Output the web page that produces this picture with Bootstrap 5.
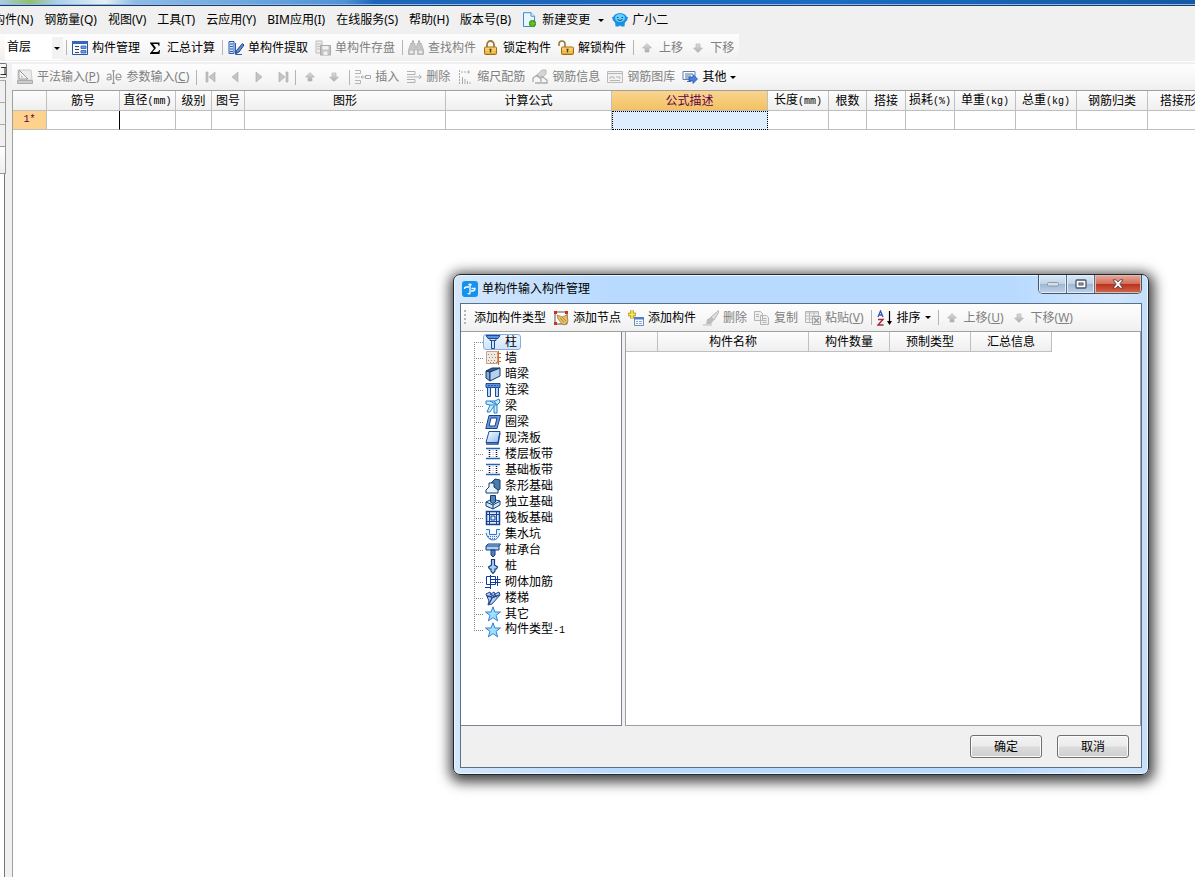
<!DOCTYPE html>
<html lang="zh-CN">
<head>
<meta charset="utf-8">
<meta name="viewport" content="width=device-width, initial-scale=1">
<title>单构件输入</title>
<link href="https://cdn.jsdelivr.net/npm/bootstrap@5.3.0/dist/css/bootstrap.min.css" rel="stylesheet">
<style>
body{font:12px/16px "Noto Sans","Noto Sans CJK SC",sans-serif;color:#000;background:#f0f0f0;overflow:hidden}
svg{display:block;flex:none}
.ico{width:16px;height:16px}
.caption-strip{height:6px;background:linear-gradient(90deg,#a9cbe8 0,#8ec06c 30px,#a8cdec 55px,#e3f0f4 105px,#8dbbe6 135px,#6ba6df 250px,#4f92d6 345px,#1c65b8 375px,#1b6bc0 70%,#1459a4);border-bottom:1px solid #1d3b63;box-shadow:inset 0 -1px #8fbbe6}
.menu-row{height:28px;margin-left:-7px;gap:11px}
.menu-row a,.menu-row button{color:#000;text-decoration:none;border:0;background:none;padding:0;white-space:nowrap}
.strip{background:linear-gradient(#fdfdfd,#f8f8f8 50%,#efefef)}
.strip-a{height:27px;width:max-content;padding:0 1px 0 5px}
.strip-b{height:26px;padding-left:2px;overflow:hidden}
.tool{display:flex;align-items:center;gap:4px;height:24px;padding:0 4px 0 3px;border:0;background:none;color:#000;white-space:nowrap;flex:none}
.tool:disabled{color:#808080}
.tool.bare{width:24px;padding:0;justify-content:center}
.divide{width:1px;height:15px;background:#b4b4b4;margin:0 2px 0 3px;flex:none}
.drop{width:0;height:0;border:3px solid transparent;border-top:3px solid #000;border-bottom:0}
.floor{position:relative;width:58px;height:25px;background:#fff}
.floor select{appearance:none;border:0;background:none;width:100%;height:24px;padding:0 2px;color:#000}
.floor::after{content:"";position:absolute;right:0;top:2px;width:11px;height:22px;background:#f2f2f2;pointer-events:none}
.floor .drop{position:absolute;right:3px;top:12px;z-index:1;pointer-events:none}
.work{border-top:1px solid #fff;min-height:0}
.work-body{padding-top:2px}
.side{width:12px;padding-top:1px}
.side-x{width:7px;height:15px;border:1px solid #777;border-left:0;border-radius:0 2px 2px 0;background:#f6f6f6;line-height:12px;padding:0;overflow:hidden;font-size:10px;margin-bottom:2px;color:#000}
.side i{width:6px;height:22px;border-top:1px solid #aaa;border-right:1px solid #999}
.side b{width:6px;height:28px;background:linear-gradient(#fff,#eee);border:1px solid #999;border-left:0}
.side div{width:5px;background:#fff;border-right:1px solid #777}
.sheet-area{background:#fff;border-left:1px solid #a0a0a0;border-top:1px solid #a0a0a0;min-width:0;overflow:hidden}
.sheet{table-layout:fixed;border-collapse:separate;border-spacing:0;line-height:16px;width:1208px}
.sheet th,.sheet td{padding:0;height:19px;border-right:1px solid #bfbfbf;border-bottom:1px solid #bfbfbf;text-align:center;font-weight:400;white-space:nowrap;background:#fff}
.sheet thead th{height:20px;background:linear-gradient(#fdfdfd,#efefef)}
.sheet .mono,.mono{font-family:"Liberation Mono","Noto Sans CJK SC",monospace;font-size:10px}
.sheet thead .hot{background:linear-gradient(#f9d58f,#f3c163);color:#600050}
.sheet tbody .rowno{background:#fdd28d;color:#600050}
.sheet tbody .picked{background:#dfeeff;border:1px dotted #000}
.sheet tbody .caret-here{border-right-color:#000}
.win{position:absolute;left:453px;top:274px;width:696px;height:501px;border:1px solid #1e2831;border-radius:7px;background:linear-gradient(90deg,#d4e7fb,#b8daff 160px,#b8daff 80%,#cfe5fd 95%,#c3dffc);box-shadow:inset 0 0 0 1px #eef7ff,1px 3px 13px 4px rgba(0,0,0,.75);padding:0 6px 6px}
.win-title{height:28px;padding-left:2px}
.win-title h1{font-size:12px;line-height:16px;margin:0;font-weight:400}
.win-keys{height:19px;border:1px solid #44566b;border-top:0;border-radius:0 0 5px 5px;overflow:hidden}
.win-keys button{width:28px;border:0;border-right:1px solid #5b6d83;padding:0 0 1px;display:flex;align-items:center;justify-content:center;background:linear-gradient(#dbe9f7,#c0d3e7 48%,#9fb8d2 52%,#bcd2e8);box-shadow:inset 0 0 0 1px #e3eefa}
.win-keys button:last-child{width:46px;border:0;background:linear-gradient(#e8aa9c,#d2705c 48%,#b9331c 52%,#d2694c);box-shadow:inset 0 0 0 1px #eab9ab}
.win-in{border:1px solid #5c7085;background:#f0f0f0}
.win-tools{height:28px;border-bottom:1px solid #a0a0a0;overflow:hidden}
.grip{width:2px;height:15px;margin:0 5px 0 3px;background:repeating-linear-gradient(#b5b5b5 0 2px,transparent 2px 4px)}
.tree{width:161px;border-right:1px solid #7b8490;border-bottom:1px solid #7b8490;background:#fff;padding:2px 0 0 13px;margin:0}
.tree li{display:flex;align-items:center;height:16px;list-style:none}
.tree li::before{content:"";width:9px;height:16px;flex:none;background:repeating-linear-gradient(#888 0 1px,transparent 1px 2px) 0 0/1px 100% no-repeat,repeating-linear-gradient(90deg,#888 0 1px,transparent 1px 2px) 0 8px/100% 1px no-repeat}
.tree li:first-child::before{background-size:1px 8px,100% 1px;background-position:0 8px,0 8px}
.tree li:last-child::before{background-size:1px 8px,100% 1px}
.tree button{display:flex;align-items:center;gap:4px;height:16px;border:1px solid transparent;border-radius:3px;background:none;padding:0 3px 0 1px;color:#000;line-height:14px;white-space:nowrap}
.tree .on{border-color:#84aede;background:linear-gradient(#eff6fe,#cfe3fb)}
.list-area{margin-left:3px;background:#fff;border-left:1px solid #a0a0a0;border-bottom:1px solid #a0a0a0;border-right:1px solid #a0a0a0}
.list-area .sheet{width:426px}
.win-foot{height:41px;padding-right:12px;gap:15px}
.win-foot button{width:72px;height:23px;border:1px solid #707070;border-radius:3px;background:linear-gradient(#f3f3f3,#ebebeb 49%,#dcdcdc 51%,#cfcfcf);box-shadow:inset 0 0 0 1px #fafafa;padding:0;color:#000}
</style>
</head>
<body class="d-flex flex-column vh-100">
<svg width="0" height="0" class="position-absolute" aria-hidden="true">
<defs>
<linearGradient id="gold" x2="0" y2="1"><stop stop-color="#fbe08a"/><stop offset="1" stop-color="#e09a1c"/></linearGradient>
<linearGradient id="blu" x2="1" y2="1"><stop stop-color="#fff"/><stop offset="1" stop-color="#8fbdf2"/></linearGradient>
<linearGradient id="grey" x2="0" y2="1"><stop stop-color="#ddd"/><stop offset="1" stop-color="#aaa"/></linearGradient>
</defs>
<symbol id="up" viewBox="0 0 16 16"><path d="M8 3.500 12.500 8H10v4H6V8H3.500z" fill="url(#grey)" stroke="#b8b8b8" stroke-width=".7"/></symbol>
<symbol id="down" viewBox="0 0 16 16"><path d="M8 12.500 12.500 8H10V4H6v4H3.500z" fill="url(#grey)" stroke="#b8b8b8" stroke-width=".7"/></symbol>
<symbol id="star" viewBox="0 0 16 16"><path d="M8 .8 9.900 6H15.500L11 9.400l1.700 5.500L8 11.600l-4.700 3.300L5 9.400.500 6h5.600z" fill="#9fe0fb" stroke="#2e7fdc"/></symbol>
<symbol id="band" viewBox="0 0 16 16"><path d="M1 2.500h14M1 12.500h14" stroke="#2b62b5" stroke-width="1.400"/><path d="M4.500 4v8M11.500 4v8" stroke="#111" stroke-width="1.500" stroke-dasharray="1 1"/><path d="M8 4v8" stroke="#9cc0ee" stroke-dasharray="1 1"/></symbol>
<symbol id="padlock" viewBox="0 0 16 16"><rect x="1.500" y="7" width="12" height="7.500" rx="1" fill="url(#gold)" stroke="#a66c10"/><path d="M3 10.500h9M3 12.500h9" stroke="#f8d77b" stroke-width=".7"/><path d="M7.500 9v3.500M6.500 9.500h2" stroke="#5b3c08" stroke-width="1.300"/></symbol>
</svg>

<header class="flex-shrink-0">
<div class="caption-strip"></div>
<nav class="menu-row d-flex align-items-center" aria-label="菜单">
<a href="#">构件(N)</a><a href="#">钢筋量(Q)</a><a href="#">视图(V)</a><a href="#">工具(T)</a><a href="#">云应用(Y)</a><a href="#">BIM应用(I)</a><a href="#">在线服务(S)</a><a href="#">帮助(H)</a><a href="#">版本号(B)</a>
<div class="d-flex gap-2">
<button class="d-flex align-items-center gap-1"><svg class="ico" viewBox="0 0 16 16"><path d="M1.500.7h7.500l3.500 3.500v10.300h-11z" fill="#e8f7fd" stroke="#3d8ccc"/><path d="M9 .7v3.500h3.500" fill="#fff" stroke="#3d8ccc"/><path d="M10.500 8v7M7 11.500h7" stroke="#3a8c13" stroke-width="4"/><path d="M10.500 8.500v6M7.500 11.500h6" stroke="#64c52a" stroke-width="2"/></svg>新建变更<span class="drop ms-1"></span></button>
<button class="d-flex align-items-center gap-1"><svg class="ico" viewBox="0 0 16 16"><ellipse cx="8" cy="6.500" rx="7" ry="5.500" fill="#1c8fe3"/><path d="M0 5h3v3.500H1zM16 5h-3v3.500h2zM3 9h10l-.5 5.500H9.500L8 13.500 6.500 14.500H3.500z" fill="#1c8fe3"/><ellipse cx="8" cy="6" rx="5" ry="4" fill="#62d3fb"/><path d="M5 5.500h1.500M9.500 5.500H11M5.500 7.500q2.500 2 5 0" fill="none" stroke="#0c4a8c"/></svg>广小二</button>
</div>
</nav>
<div class="strip strip-a d-flex align-items-center">
<label class="floor"><select aria-label="楼层"><option>首层</option></select><span class="drop"></span></label>
<span class="divide"></span>
<button class="tool"><svg class="ico" viewBox="0 0 16 16"><path d="M.500 1.500h15v13H.500z" fill="#f4f8ff" stroke="#2454a8"/><path d="M0 1h16v3H0z" fill="#3568bd"/><path d="M3 6.500h4M3 9.500h4M3 12.500h4" stroke="#444"/><path d="M9 6h5v2.500H9zM9 10.500h5v2.500H9z" fill="#6f9be0" stroke="#2454a8" stroke-width=".7"/></svg>构件管理</button>
<button class="tool"><svg class="ico" viewBox="0 0 16 16"><path d="M3 2.500h9.500V6h-.8C11.500 4.500 11 4 9.500 4H6l3 4-3.500 4H10c1.300 0 1.800-.7 2.200-2H13l-.5 4H3v-.8L7 8.500 3 3.200z"/></svg>汇总计算</button>
<span class="divide"></span>
<button class="tool"><svg class="ico" viewBox="0 0 16 16"><path d="M1 1.500h5v12H1z" fill="#cfe0f8" stroke="#2b5dab"/><path d="M2 4h3M2 6.500h3M2 9h3M2 11.500h3" stroke="#2b5dab"/><path d="M7.500 3v11.500H14" stroke="#2b5dab" fill="none"/><path d="M14.500 3.500 16 5l-5 7-3 1.500.5-3z" fill="#5c8fda" stroke="#1f4587"/></svg>单构件提取</button>
<button class="tool" disabled><svg class="ico" viewBox="0 0 16 16"><path d="M1 1h6v12H1z" fill="#eee" stroke="#bbb"/><path d="M2 4h4M2 6.500h4M2 9h4" stroke="#bbb"/><path d="M5.500 5.500h10v9.500h-10z" fill="#c4c4c4" stroke="#a9a9a9"/><path d="M7.500 6h6v3.500h-6zM8.500 11.500h4V15h-4z" fill="#f1f1f1"/></svg>单构件存盘</button>
<span class="divide"></span>
<button class="tool" disabled><svg class="ico" viewBox="0 0 16 16"><path d="M3 3h3.500l1 4h1l1-4H13l2.500 7v4.500H9.500V10h-3v4.500H.5V10z" fill="#c5c5c5" stroke="#aaa" stroke-width=".7"/><path d="M4 1.500h2M10 1.500h2" stroke="#aaa" stroke-width="2"/><path d="M2 12h3M11 12h3" stroke="#eee" stroke-width="2"/></svg>查找构件</button>
<button class="tool"><svg class="ico" viewBox="0 0 16 16"><path d="M4 8V4.500a3.500 3.500 0 0 1 7 0V8" fill="none" stroke="#9c7a3c" stroke-width="1.800"/><use href="#padlock"/></svg>锁定构件</button>
<button class="tool"><svg class="ico" viewBox="0 0 16 16"><path d="M1 6V4a3 3 0 0 1 6 0v4" fill="none" stroke="#9c7a3c" stroke-width="1.600"/><use href="#padlock" x="2"/></svg>解锁构件</button>
<span class="divide"></span>
<button class="tool" disabled><svg class="ico"><use href="#up"/></svg>上移</button>
<button class="tool" disabled><svg class="ico"><use href="#down"/></svg>下移</button>
</div>
</header>

<main class="work d-flex flex-grow-1">
<aside class="side d-flex flex-column flex-shrink-0"><button class="side-x" aria-label="固定">工</button><i></i><i></i><i></i><b></b><div class="flex-grow-1"></div></aside>
<section class="work-body d-flex flex-column flex-grow-1 overflow-hidden">
<div class="strip strip-b d-flex align-items-center flex-shrink-0">
<button class="tool" disabled><svg class="ico" viewBox="0 0 16 16"><path d="M1 1h13l1 10H1z" fill="#ececec" stroke="#ccc"/><path d="M2 1v9h9z" fill="#f8f8f8" stroke="#999"/><path d="M4 6v2.500h2.500z" fill="#bbb"/><path d="M.500 11.500h15v3H.500z" fill="#ccc" stroke="#aaa"/></svg><span>平法输入(<u>P</u>)</span></button>
<button class="tool" disabled><svg class="ico" viewBox="0 0 16 16"><path d="M1 6q3-2 4 0v5M5 8Q1 8 1 10q1 2 4 0M10 8.500h5Q15 5 12.500 5T10 8.500q0 3.500 5 2M6 1.500q1.500 0 1.500 1.500v10Q7.500 14.500 6 14.500M9 1.500Q7.500 1.500 7.500 3M9 14.500q-1.500 0-1.500-1.500" fill="none" stroke="#999" stroke-width="1.200"/></svg><span>参数输入(<u>C</u>)</span></button>
<span class="divide"></span>
<button class="tool bare" disabled aria-label="首条"><svg class="ico" viewBox="0 0 16 16"><path d="M3 3h2v10H3zM12 3v10L6 8z" fill="#c4c4c4" stroke="#aaa" stroke-width=".6"/></svg></button>
<button class="tool bare" disabled aria-label="上一条"><svg class="ico" viewBox="0 0 16 16"><path d="M11 3v10L5 8z" fill="#c4c4c4" stroke="#aaa" stroke-width=".6"/></svg></button>
<button class="tool bare" disabled aria-label="下一条"><svg class="ico" viewBox="0 0 16 16"><path d="M5 3v10l6-5z" fill="#c4c4c4" stroke="#aaa" stroke-width=".6"/></svg></button>
<button class="tool bare" disabled aria-label="末条"><svg class="ico" viewBox="0 0 16 16"><path d="M11 3h2v10h-2zM4 3v10l6-5z" fill="#c4c4c4" stroke="#aaa" stroke-width=".6"/></svg></button>
<span class="divide ms-0"></span>
<button class="tool bare" disabled aria-label="上移"><svg class="ico"><use href="#up"/></svg></button>
<button class="tool bare" disabled aria-label="下移"><svg class="ico"><use href="#down"/></svg></button>
<span class="divide"></span>
<button class="tool" disabled><svg class="ico" viewBox="0 0 16 16"><path d="M0 1.500h5.500v3H0M0 11.500h5.500v3H0M0 8h5" fill="none" stroke="#b5b5b5"/><path d="M10 8H6l1.500-1.500M6 8l1.500 1.500M10.500 6.500h5v3h-5z" fill="none" stroke="#aaa"/></svg>插入</button>
<button class="tool" disabled><svg class="ico" viewBox="0 0 16 16"><path d="M1 2.500h8v3H1M1 10.500h8v3H1M1 8h14M13 6l2.500 2-2.500 2" fill="none" stroke="#b0b0b0"/></svg>删除</button>
<button class="tool" disabled><svg class="ico" viewBox="0 0 16 16"><path d="M2.500 1v14M4 3h9M11 1.500 13 3l-2 1.500" fill="none" stroke="#aaa" stroke-dasharray="2 1"/><path d="M5.500 8v7M8 10v5M10.500 12v3M13 13v2" stroke="#aaa"/></svg>缩尺配筋</button>
<button class="tool" disabled><svg class="ico" viewBox="0 0 16 16"><path d="M4 7 10 1h4v4l-4 4-4-1z" fill="#d5d5d5" stroke="#bbb"/><path d="M1 13V9l4-3 4 4v4l-6 0M9 7l6 4v3h-5" fill="none" stroke="#aaa" stroke-width="1.300"/></svg>钢筋信息</button>
<button class="tool" disabled><svg class="ico" viewBox="0 0 16 16"><path d="M.500 2.500h15v11H.500z" fill="#f2f2f2" stroke="#bbb"/><path d="M1 4.500h14M3 10V8h4v2M9 8h4v2M3 11.500h10" fill="none" stroke="#b5b5b5"/></svg>钢筋图库</button>
<button class="tool"><svg class="ico" viewBox="0 0 16 16"><path d="M1 2.500h12v8H1z" fill="#fff" stroke="#5d7fb5"/><path d="M3 5h8M3 7h6M3 9h4M5 12.500h4" stroke="#4b6da5"/><path d="M7 8h4V5.500l4.500 4.500-4.500 4.500V12H7z" fill="#4a83dd" stroke="#1d4b9c" stroke-width=".7"/></svg>其他<span class="drop"></span></button>
</div>
<div class="sheet-area flex-grow-1">
<table class="sheet">
<colgroup><col style="width:34px"><col style="width:73px"><col style="width:56px"><col style="width:36px"><col style="width:33px"><col style="width:201px"><col style="width:166px"><col style="width:156px"><col style="width:61px"><col style="width:38px"><col style="width:39px"><col style="width:49px"><col style="width:61px"><col style="width:61px"><col style="width:71px"><col style="width:73px"></colgroup>
<thead><tr><th></th><th>筋号</th><th>直径<span class="mono">(mm)</span></th><th>级别</th><th>图号</th><th>图形</th><th>计算公式</th><th class="hot">公式描述</th><th>长度<span class="mono">(mm)</span></th><th>根数</th><th>搭接</th><th>损耗<span class="mono">(%)</span></th><th>单重<span class="mono">(kg)</span></th><th>总重<span class="mono">(kg)</span></th><th>钢筋归类</th><th>搭接形式</th></tr></thead>
<tbody><tr><th class="rowno mono">1*</th><td class="caret-here"></td><td></td><td></td><td></td><td></td><td></td><td class="picked"></td><td></td><td></td><td></td><td></td><td></td><td></td><td></td><td></td></tr></tbody>
</table>
</div>
</section>
</main>

<div class="win d-flex flex-column" role="dialog" aria-labelledby="win-name">
<div class="win-title d-flex flex-shrink-0">
<div class="d-flex align-items-center gap-1 flex-grow-1"><svg class="ico" viewBox="0 0 16 16"><rect width="16" height="16" rx="3" fill="#1592ee"/><path d="M2.500 8q0-2 2-2H7M9.500 7.500H13q0 2.500-2.500 2.500H9M6.500 4Q8 2.500 9.500 4M8 4v8q0 1.500-2.500.500" fill="none" stroke="#fff" stroke-width="1.300"/></svg><h1 id="win-name">单构件输入构件管理</h1></div>
<div class="win-keys d-flex">
<button aria-label="最小化"><svg width="12" height="6"><rect x=".5" y="1.500" width="11" height="3.500" rx="1" fill="#d4dfea" stroke="#8b9bad"/></svg></button>
<button aria-label="最大化"><svg width="12" height="10"><rect x="1" y="1" width="10" height="8" rx="1" fill="#fff" stroke="#48566b" stroke-width="1.300"/><rect x="4" y="4" width="4" height="2" fill="#9fb8d2" stroke="#48566b"/></svg></button>
<button aria-label="关闭"><svg width="12" height="10"><path d="M1 .800h3l2 2.300L8 .800h3L7.800 5 11 9.200H8L6 6.900 4 9.200H1L4.200 5z" fill="#fff" stroke="#53414a" stroke-width=".9"/></svg></button>
</div>
</div>
<div class="win-in d-flex flex-column flex-grow-1">
<div class="win-tools strip d-flex align-items-center flex-shrink-0">
<span class="grip"></span>
<button class="tool">添加构件类型</button>
<button class="tool"><svg class="ico" viewBox="0 0 16 16"><path d="M2 2h12v12H2z" fill="#fff" stroke="#555"/><path d="M1 1h3v3H1zM12 1h3v3h-3zM1 12h3v3H1z" fill="#cc3218"/><path d="m4 5 3 1 2 1 5-2 1 6-3 4-3-1-4-5z" fill="#e5bd69" stroke="#a0742a" stroke-width=".7"/><path d="m7 8 4 4M9 7l4 4" stroke="#a0742a" stroke-width=".7"/></svg>添加节点</button>
<button class="tool"><svg class="ico" viewBox="0 0 16 16"><path d="M4 .500v8M0 4.500h8" stroke="#a88910" stroke-width="3.500"/><path d="M4 1v7M.500 4.500h7" stroke="#fae85c" stroke-width="1.800"/><path d="M6.500 7.500h9v8h-9z" fill="#f5f9ff" stroke="#6c8dbd"/><path d="M6 7h10v2.500H6z" fill="#557fc2"/><path d="M8 11.500h2M8 13.500h2M11 11.500h3M11 13.500h3" stroke="#8baad9"/></svg>添加构件</button>
<button class="tool" disabled><svg class="ico" viewBox="0 0 16 16"><path d="M15.500.500 16 2l-5 8-3-3z" fill="#ddd" stroke="#aaa" stroke-width=".8"/><path d="m8 7 3 3-3 4-5 .500 1-5z" fill="#bdbdbd"/><path d="M0 15h9" stroke="#ccc" stroke-width="1.500"/></svg>删除</button>
<button class="tool" disabled><svg class="ico" viewBox="0 0 16 16"><path d="M.500 1.500h6l2 2v7h-8zM6.500 5.500h6l2 2v7h-8z" fill="#efefef" stroke="#b5b5b5"/><path d="M2 4.500h3M2 6.500h3M8.500 8.500h4M8.500 10.500h4M8.500 12.500h4" stroke="#b5b5b5"/></svg>复制</button>
<button class="tool" disabled><svg class="ico" viewBox="0 0 16 16"><path d="M.500 1.500h13v11H.500z" fill="#f3f3f3" stroke="#b5b5b5"/><path d="M.500 3h13M.500 6h13M.500 9h13M4.500 2v10M9 2v10" stroke="#bbb"/><path d="M7.500 6.500h8v8h-8z" fill="#eee" stroke="#a5a5a5"/><path d="m9 8 5 5M14 8l-5 5" stroke="#999" stroke-width="1.500"/></svg><span>粘贴(<u>V</u>)</span></button>
<span class="divide"></span>
<button class="tool"><svg class="ico" viewBox="0 0 16 16"><path d="M1 7 3.500 1 6 7M2 5h3" fill="none" stroke="#3158a8" stroke-width="1.300"/><path d="M1 9.500h5l-5 5.500h5.500" fill="none" stroke="#a12c3a" stroke-width="1.400"/><path d="M12.500 1v12" stroke="#000" stroke-width="1.200"/><path d="M10 11h5l-2.500 4z"/></svg>排序<span class="drop"></span></button>
<span class="divide"></span>
<button class="tool" disabled><svg class="ico"><use href="#up"/></svg><span>上移(<u>U</u>)</span></button>
<button class="tool" disabled><svg class="ico"><use href="#down"/></svg><span>下移(<u>W</u>)</span></button>
</div>
<div class="d-flex flex-grow-1">
<ul class="tree flex-shrink-0">
<li><button class="on"><svg class="ico" viewBox="0 0 16 16"><path d="M1 1.500h14l-2 3H3z" fill="#5a92dc" stroke="#1c4b98"/><path d="M5 4.500h6v2H5zM6.500 6.500h3v8h-3z" fill="#cfe4fc" stroke="#1c4b98"/></svg>柱</button></li>
<li><button><svg class="ico" viewBox="0 0 16 16"><path d="M1.500 1.500h11v12h-11z" fill="#f1e8e0" stroke="#c9a08a"/><path d="M3 4.500h8M4 7.500h8M3 10.500h9M5 12.500h7" stroke="#888" stroke-dasharray="1 2"/><path d="M13.500 1v14M12 3.500h4M12 7.500h4M12 11.500h4" stroke="#cf6b35"/></svg>墙</button></li>
<li><button><svg class="ico" viewBox="0 0 16 16"><path d="m1 5 6-3h8l-5 4z" fill="#385f91" stroke="#123661"/><path d="m1 5 4 1v9l-4-3z" fill="#8aaedc" stroke="#123661"/><path d="m5 6 10-4v8L5 15z" fill="#b5d0f0" stroke="#123661"/></svg>暗梁</button></li>
<li><button><svg class="ico" viewBox="0 0 16 16"><path d="M1 1.500h14v4H1z" fill="#5d93e1" stroke="#1c4b98"/><path d="M3 3.500h10" stroke="#2454a8" stroke-dasharray="2 1"/><path d="M2.500 5.500h3v9h-3zM10.500 5.500h3v9h-3z" fill="#bcd8fa" stroke="#1c4b98"/></svg>连梁</button></li>
<li><button><svg class="ico" viewBox="0 0 16 16"><path d="M1 3h9l4-2 1 3-3 3v8H9V8l-4 6H2l3-7-4-1z" fill="#c6ecff" stroke="#2b7fcb"/><path d="m5 3 7 4M9 3l3 4M5 7h6" stroke="#2b7fcb"/></svg>梁</button></li>
<li><button><svg class="ico" viewBox="0 0 16 16"><path d="M4 1.500h11.500L12 14.500H.800z" fill="#6f9edf" stroke="#163f88"/><path d="M6 4h6l-2 8H4z" fill="#fff" stroke="#163f88"/></svg>圈梁</button></li>
<li><button><svg class="ico" viewBox="0 0 16 16"><path d="M4 1.500h11l-2 11H1z" fill="url(#blu)" stroke="#1d4a9b"/><path d="M1 14h12l2-11" fill="none" stroke="#1d4a9b" stroke-width="1.300"/></svg>现浇板</button></li>
<li><button><svg class="ico"><use href="#band"/></svg>楼层板带</button></li>
<li><button><svg class="ico"><use href="#band"/></svg>基础板带</button></li>
<li><button><svg class="ico" viewBox="0 0 16 16"><path d="m5 6 5-5 5 1v9l-5 3z" fill="#4b7cae" stroke="#123d6f"/><path d="M4 5h5v4l4 3v3H1v-3l3-3z" fill="#eaf5ff" stroke="#123d6f"/></svg>条形基础</button></li>
<li><button><svg class="ico" viewBox="0 0 16 16"><path d="m1 8 6-3 8 2v4l-7 4-7-3z" fill="#cfe7fa" stroke="#123d6f"/><path d="m1 8 7 3 7-4M8 11v4" fill="none" stroke="#123d6f"/><path d="M5.500 1.500h5V8L8 9.500 5.500 8z" fill="#5486b8" stroke="#123d6f"/></svg>独立基础</button></li>
<li><button><svg class="ico" viewBox="0 0 16 16"><path d="M1.500 1.500h13v13h-13z" fill="#dceafd" stroke="#164391" stroke-width="1.500"/><path d="M4.500 2v12M11.500 2v12M2 4.500h12M2 11.500h12M6 6h4v4H6z" fill="none" stroke="#164391"/></svg>筏板基础</button></li>
<li><button><svg class="ico" viewBox="0 0 16 16"><path d="M1 3.500h3l1 4h6l1-4h3v4q-2 6-7 6T1 8z" fill="#e4f1fd"/><path d="M1 3.500h3.500v5h7v-5H15M1 7q2 7 7 7t7-7" fill="none" stroke="#3476c9"/><path d="M3 10.500h10M5 12.500h6" stroke="#3476c9" stroke-dasharray="1 1"/></svg>集水坑</button></li>
<li><button><svg class="ico" viewBox="0 0 16 16"><path d="m1 4 2-2h12.500L14 4v4H1z" fill="#a9cff5" stroke="#123d7f"/><path d="M1 4h13" stroke="#123d7f"/><path d="M6 8h4v5l-2 2-2-2z" fill="#4b83c5" stroke="#123d7f"/></svg>桩承台</button></li>
<li><button><svg class="ico" viewBox="0 0 16 16"><path d="M6.500 1.500h3V7l3 2-1 2H10v2l-2 2.500L6 13v-2H4.500l-1-2 3-2z" fill="#a9cff5" stroke="#123d7f" stroke-width="1.200"/></svg>桩</button></li>
<li><button><svg class="ico" viewBox="0 0 16 16"><path d="M1.500 2.500h9v8h-9zM5.500 5.500h10M5.500 8.500h10M5.500 1v14M12.500 2v10M0 13.500h5" fill="none" stroke="#12399b"/></svg>砌体加筋</button></li>
<li><button><svg class="ico" viewBox="0 0 16 16"><path d="m1 4 4-2 1 2 3-2 1 2 4-2 1 3-8 9-4 1 1-4z" fill="#b6cff2" stroke="#1c438e"/><path d="m2 6 5 1M5 4l5 3M9 4l3 3M4 14l3-6 7-3" fill="none" stroke="#1c438e" stroke-width="1.300"/></svg>楼梯</button></li>
<li><button><svg class="ico"><use href="#star"/></svg>其它</button></li>
<li><button><svg class="ico"><use href="#star"/></svg><span>构件类型<span class="mono">-1</span></span></button></li>
</ul>
<div class="list-area flex-grow-1">
<table class="sheet">
<colgroup><col style="width:32px"><col style="width:151px"><col style="width:81px"><col style="width:81px"><col style="width:81px"></colgroup>
<thead><tr><th></th><th>构件名称</th><th>构件数量</th><th>预制类型</th><th>汇总信息</th></tr></thead>
</table>
</div>
</div>
<div class="win-foot d-flex align-items-center justify-content-end flex-shrink-0"><button>确定</button><button>取消</button></div>
</div>
</div>
<script src="https://cdn.jsdelivr.net/npm/bootstrap@5.3.0/dist/js/bootstrap.bundle.min.js"></script>
</body>
</html>
